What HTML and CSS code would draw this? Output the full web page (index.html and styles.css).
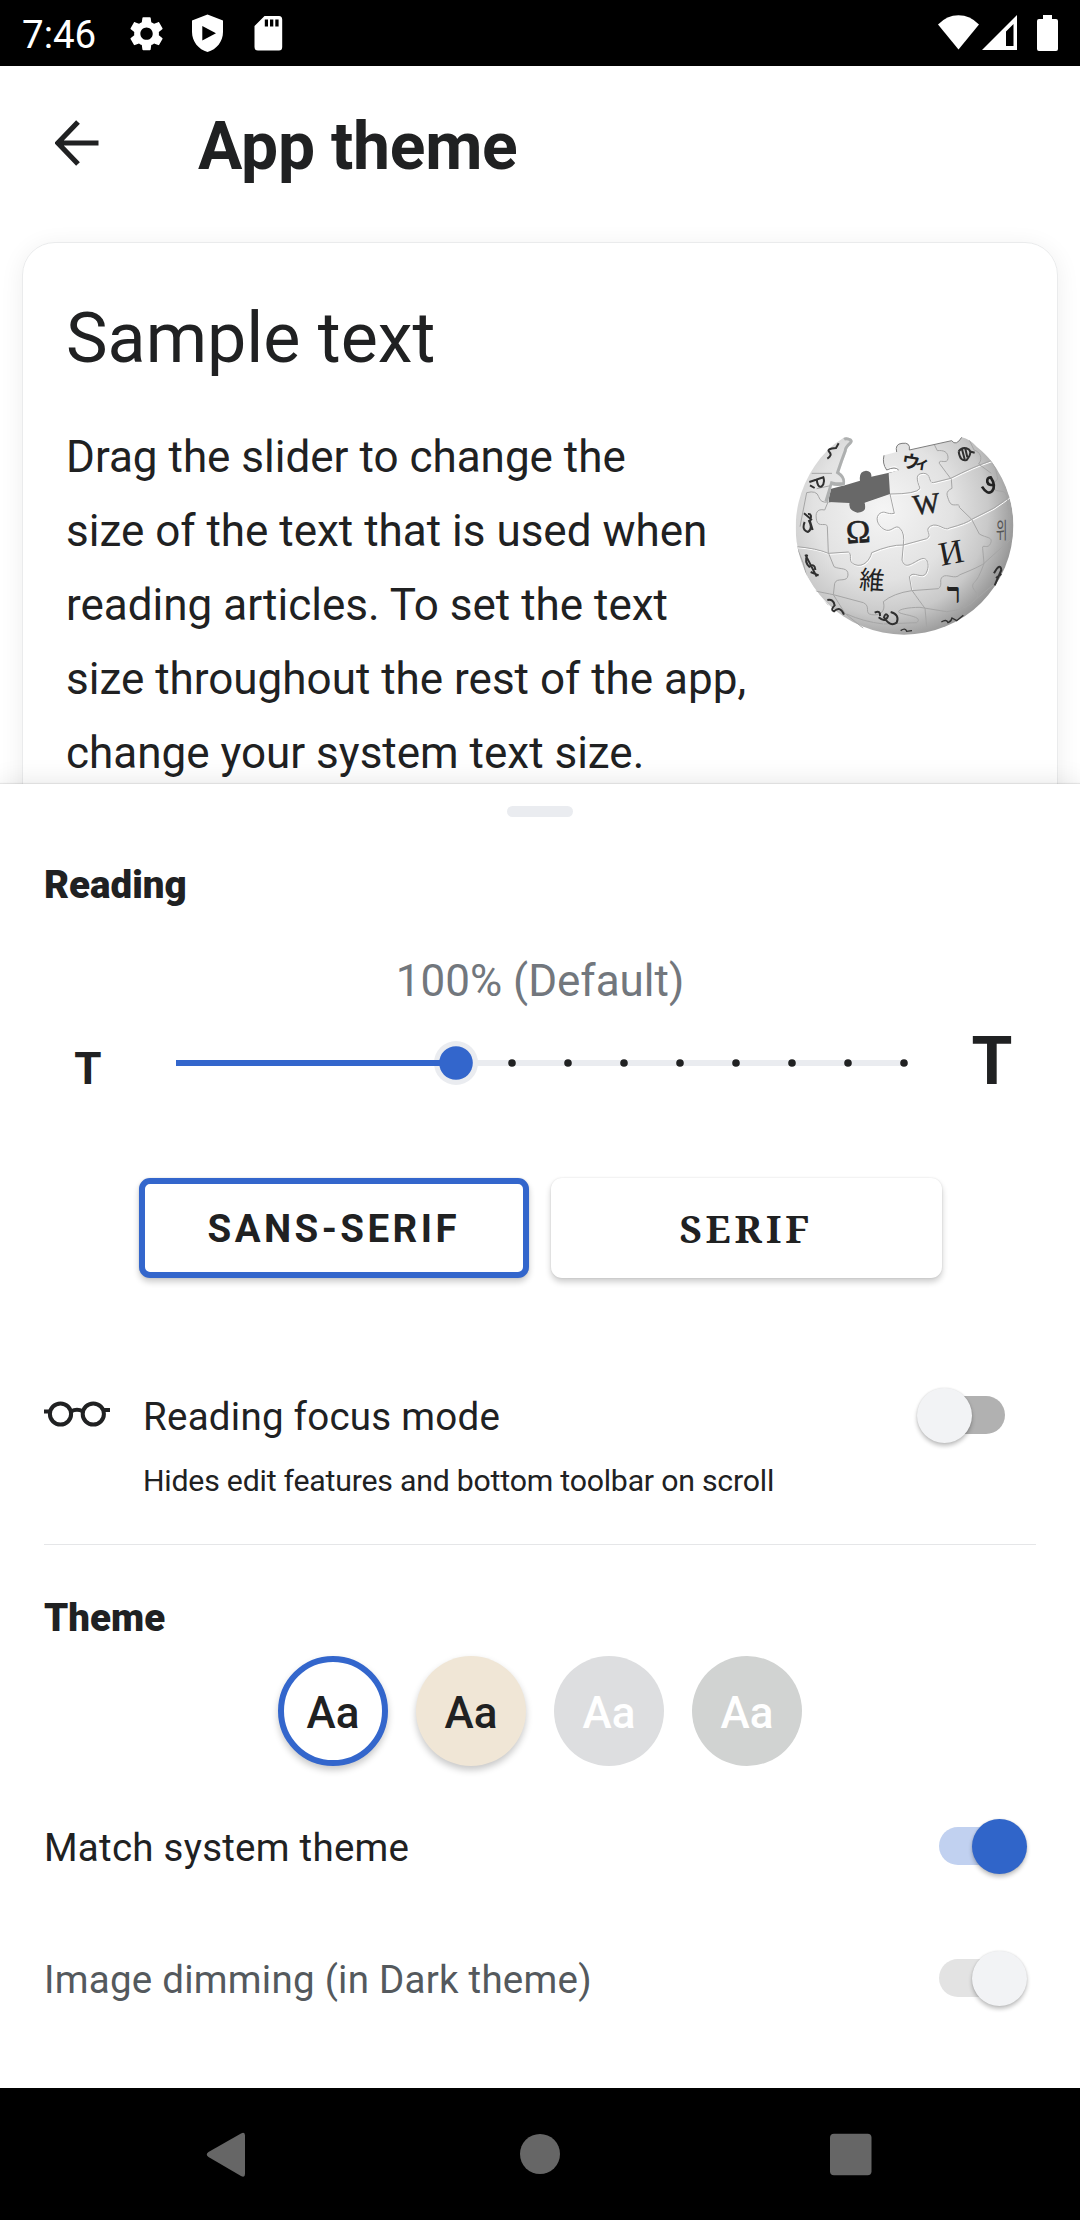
FILE: index.html
```html
<!DOCTYPE html>
<html lang="en">
<head>
<meta charset="utf-8">
<title>App theme</title>
<link rel="stylesheet" href="styles.css">
</head>
<body>
<div class="status-bar">
  <span class="clock">7:46</span>
  <svg class="status-left" width="164" height="66" viewBox="124 0 164 66" fill="#fff">
    <path transform="translate(125.9 13) scale(1.72)" d="M19.14 12.94c.04-.3.06-.61.06-.94 0-.32-.02-.64-.07-.94l2.03-1.58c.18-.14.23-.41.12-.61l-1.92-3.32c-.12-.22-.37-.29-.59-.22l-2.39.96c-.5-.38-1.03-.7-1.62-.94l-.36-2.54c-.04-.24-.24-.41-.48-.41h-3.84c-.24 0-.43.17-.47.41l-.36 2.54c-.59.24-1.13.57-1.62.94l-2.39-.96c-.22-.08-.47 0-.59.22L2.740 8.870c-.12.21-.08.47.12.61l2.03 1.58c-.05.3-.09.63-.09.94s.02.64.07.94l-2.03 1.58c-.18.14-.23.41-.12.61l1.92 3.32c.12.22.37.29.59.22l2.39-.96c.5.38 1.03.7 1.62.94l.36 2.54c.05.24.24.41.48.41h3.84c.24 0 .44-.17.47-.41l.36-2.54c.59-.24 1.13-.56 1.62-.94l2.39.96c.22.08.47 0 .59-.22l1.92-3.32c.12-.22.07-.47-.12-.61l-2.01-1.58zM12 15.6c-1.98 0-3.6-1.62-3.6-3.6s1.62-3.6 3.6-3.6 3.6 1.62 3.6 3.6-1.62 3.6-3.6 3.6z"/>
    <path fill-rule="evenodd" d="M207.500 14.500 223 20.500V32C223 41.500 216.500 49.500 207.500 52 198.500 49.500 192 41.500 192 32V20.500ZM202.300 26V40.500L216 33.200Z"/>
    <path fill-rule="evenodd" d="M264.500 16H279Q282.200 16 282.200 19.500V47Q282.200 50.500 279 50.500H258Q254.500 50.500 254.500 47V26ZM264.800 19.500V26.500H268V19.500ZM270 19.500V26.500H273.300V19.500ZM275.300 19.500V26.500H278.600V19.500Z"/>
  </svg>
  <svg class="status-right" width="124" height="66" viewBox="936 0 124 66" fill="#fff">
    <path d="M938 24.500Q947 15.300 958.500 15.300T979 24.500L958.500 49.500Z"/>
    <path fill-rule="evenodd" d="M982 50 1017 15V50ZM1006 31.500V46H1013.500V24Z"/>
    <path d="M1043 15H1052V19H1056Q1058 19 1058 21V49Q1058 51 1056 51H1039Q1037 51 1037 49V21Q1037 19 1039 19H1043Z"/>
  </svg>
</div>

<div class="preview">
  <header class="app-bar">
    <svg class="back" width="44" height="46" viewBox="0 0 44 46" fill="none" stroke="#202122" stroke-width="5.200">
      <path d="M43.500 23H4M23 2 2.800 23 23 44"/>
    </svg>
    <h1 class="title">App theme</h1>
  </header>
  <section class="card">
    <h2 class="card-title">Sample text</h2>
    <div class="card-body">
      <p class="card-text">Drag the slider to change the<br>size of the text that is used when<br>reading articles. To set the text<br>size throughout the rest of the app,<br>change your system text size.</p>
      <svg class="globe" width="250" height="230" viewBox="0 0 750 690">
        <defs>
          <radialGradient id="ball" gradientUnits="userSpaceOnUse" cx="310" cy="270" r="420">
            <stop offset="0" stop-color="#f5f5f5"/>
            <stop offset=".5" stop-color="#e2e2e2"/>
            <stop offset=".75" stop-color="#c9c9c9"/>
            <stop offset="1" stop-color="#8c8c8c"/>
          </radialGradient>
          <clipPath id="shape">
            <path d="M190 54Q200 48 214 56Q222 64 214 72Q200 84 200 94Q190 120 178 156Q200 170 194 196Q170 200 156 196L144 246L208 249Q204 270 232 278Q264 276 254 248L330 222L326 160L356 150Q350 128 320 148Q308 128 312 106L350 96Q344 72 366 70Q392 66 388 90L515 62Q528 80 545 52Q570 58 590 80Q620 104 634 124A327 327 0 1 1 104 138Q140 84 190 54Z"/>
          </clipPath>
        </defs>
        <path d="M148 208 200 194 240 182Q236 154 258 152Q276 154 274 170L354 152 330 224 254 250Q264 278 232 280 204 276 208 250L146 248Z" fill="#686868"/>
        <g clip-path="url(#shape)">
          <circle cx="372" cy="316" r="328" fill="url(#ball)"/>
          <g fill="none" stroke="#fff" stroke-width="3" transform="translate(2 3)">
            <path d="M330 222Q410 222 420 205C410 180 405 160 430 160S445 190 460 188L512 175Q580 140 634 122M50 380Q110 385 145 400L205 396C220 405 200 425 225 434S270 420 275 398Q330 374 370 375L440 356C460 345 430 330 452 318S495 335 508 324Q560 310 575 298L640 265Q670 245 692 228"/>
            <path d="M330 222L343 280C320 285 315 270 300 280S290 315 312 328 345 310 360 325Q375 340 370 375L366 420C375 450 395 430 420 418S450 440 438 460 400 450 388 470L395 510"/>
          </g>
          <g fill="none" stroke="#a5a5a5" stroke-width="3">
            <path d="M330 222Q410 222 420 205C410 180 405 160 430 160S445 190 460 188L512 175Q580 140 634 122"/>
            <path d="M50 380Q110 385 145 400L205 396C220 405 200 425 225 434S270 420 275 398Q330 374 370 375L440 356C460 345 430 330 452 318S495 335 508 324Q560 310 575 298L640 265Q670 245 692 228"/>
            <path d="M90 510Q140 520 160 524L250 548C275 560 250 580 275 584S318 575 310 545Q340 520 395 512L475 506C490 495 475 480 488 470S525 480 540 464Q600 440 612 430L690 360"/>
            <path d="M200 582Q250 605 310 612M312 612L410 608C425 595 405 590 370 582S370 562 420 562L500 575Q560 570 590 536L645 490"/>
            <path d="M144 246L134 270C110 265 105 280 110 302S140 305 142 320L145 398L162 440C180 450 205 440 204 465S170 470 164 490L160 524L195 580 250 625"/>
            <path d="M330 222L343 280C320 285 315 270 300 280S290 315 312 328 345 310 360 325Q375 340 370 375L366 420C375 450 395 430 420 418S450 440 438 460 400 450 388 470L395 510Q420 545 435 565L440 620"/>
            <path d="M460 68L472 92C490 90 505 95 504 115S475 115 478 130Q500 160 514 178L516 205C495 215 500 225 508 245S540 245 538 262L575 298L598 342C620 355 640 350 632 370S605 370 608 385L612 430Q595 480 580 490C570 510 600 515 590 536"/>
            <path d="M568 60L582 90C600 95 610 115 596 132L634 160M634 122Q650 145 652 170C660 180 630 190 640 205S675 205 680 228L690 300"/>
            <path d="M80 218Q110 210 116 230T144 246M156 196L110 206M80 218L60 320M95 160L156 160M50 380L70 430 90 510 145 556"/>
          </g>
          <path d="M190 54Q200 48 214 56Q222 64 214 72Q200 84 200 94Q190 120 178 156Q200 170 196 194Q175 198 158 194L142 246" fill="none" stroke="#aeb0b0" stroke-width="18"/>
        </g>
        <g fill="none" stroke="#7d7d7d" stroke-width="3">
          <path d="M312 106Q306 130 320 150Q346 138 356 150M350 96Q344 72 366 70Q392 66 388 90L515 62Q528 80 545 52"/>
        </g>
        <g class="glyphs">
          <text x="198" y="368" font-size="98" stroke="#222" stroke-width="2" transform="rotate(-4 238 335)">Ω</text>
          <text x="398" y="280" font-size="86" stroke="#222" stroke-width="1.500" transform="rotate(-7 440 250)">W</text>
          <text x="476" y="432" font-size="102" transform="rotate(-11 510 395)">И</text>
          <text x="238" y="508" font-size="76" transform="rotate(4 275 480)" class="cjk">維</text>
          <text x="366" y="146" font-size="54" font-weight="700" transform="rotate(9 400 125)" class="cjk">ウ</text>
          <text x="403" y="146" font-size="46" font-weight="700" transform="rotate(9 425 135)" class="cjk">ィ</text>
          <text x="648" y="354" font-size="64" textLength="34" lengthAdjust="spacingAndGlyphs" class="cjk korean">위</text>
          <text x="500" y="548" font-size="86" font-weight="700">ר</text>
        </g>
        <path d="M606 200Q622 226 636 214C646 202 640 184 632 172Q620 172 622 186 626 198 638 194" fill="none" stroke="#222" stroke-width="8"/>
        <g fill="none" stroke="#303030" stroke-width="6">
          <path d="M142 116Q158 106 148 96T168 84L176 70M88 186L130 172Q136 190 124 200 112 204 110 176M90 196L104 204M72 280L96 300M74 306Q64 330 84 336 100 326 86 300M84 282Q98 280 90 304L98 330"/>
          <path d="M76 404L110 470M82 404Q72 426 88 440 104 428 106 450M92 456L116 466M142 540Q160 536 164 556 150 570 162 574 180 556 192 584"/>
          <path d="M284 578Q302 570 300 588M296 592Q316 610 324 588 316 576 312 592 330 622 350 608 360 584 332 576"/>
          <path d="M536 94Q548 78 566 88 578 98 560 120 540 126 536 94M546 88L554 118M556 86L562 112M568 94L584 98M642 460Q660 426 664 450L644 496M648 474L664 462"/>
          <path d="M484 606Q500 596 504 608 514 604 516 594L530 602 550 586M362 632Q376 622 380 634L396 632" stroke-width="4"/>
        </g>
      </svg>
    </div>
  </section>
</div>

<main class="sheet">
  <div class="handle"></div>
  <h3 class="section-title reading">Reading</h3>
  <p class="size-label">100% (Default)</p>
  <div class="size-row">
    <span class="t-small">T</span>
    <svg class="slider" width="728" height="46" viewBox="0 0 728 46">
      <path d="M280 23H728" stroke="#eaecf0" stroke-width="6"/>
      <circle cx="280" cy="23" r="22" fill="#eaecf0"/>
      <path d="M0 23H280" stroke="#36c" stroke-width="6"/>
      <circle cx="280" cy="23" r="16.800" fill="#36c"/>
      <path d="M336 23h0M392 23h0M448 23h0M504 23h0M560 23h0M616 23h0M672 23h0M728 23h0" stroke="#202122" stroke-width="7.600" stroke-linecap="round"/>
    </svg>
    <span class="t-large">T</span>
  </div>
  <div class="fonts">
    <button class="font-btn selected">SANS-SERIF</button>
    <button class="font-btn serif">SERIF</button>
  </div>
  <div class="focus">
    <svg class="glasses" width="66" height="26" viewBox="0 0 66 26" fill="none" stroke="#202122" stroke-width="4">
      <circle cx="16.500" cy="13" r="10.600"/>
      <circle cx="49.300" cy="13" r="10.600"/>
      <path d="M0 10.500H6.500M59.500 9H66M27 10.500Q33 7 39 10.500"/>
    </svg>
    <div class="focus-text">
      <span class="label">Reading focus mode</span>
      <span class="hint">Hides edit features and bottom toolbar on scroll</span>
    </div>
    <div class="switch off"><i class="track"></i><i class="thumb"></i></div>
  </div>
  <hr class="divider">
  <h3 class="section-title theme">Theme</h3>
  <div class="swatches">
    <button class="swatch light">Aa</button>
    <button class="swatch sepia">Aa</button>
    <button class="swatch dark">Aa</button>
    <button class="swatch black">Aa</button>
  </div>
  <div class="row"><span class="label">Match system theme</span><div class="switch on"><i class="track"></i><i class="thumb"></i></div></div>
  <div class="row muted"><span class="label">Image dimming (in Dark theme)</span><div class="switch disabled"><i class="track"></i><i class="thumb"></i></div></div>
</main>

<nav class="nav-bar">
  <svg width="1080" height="132" viewBox="0 0 1080 132" fill="#666">
    <path d="M241 45.500 208.500 64Q205 66.500 208.500 69L241 88Q245 90 245 86V47.500Q245 43.500 241 45.500Z"/>
    <circle cx="540" cy="66" r="20"/>
    <rect x="830" y="45.800" width="41.500" height="41.500" rx="4"/>
  </svg>
</nav>
</body>
</html>
```
FILE: styles.css
```css
* { box-sizing: border-box; }

body {
  margin: 0;
  width: 1080px;
  height: 2220px;
  display: flex;
  flex-direction: column;
  overflow: hidden;
  background: #fff;
  color: #202122;
  font-family: Roboto, sans-serif;
}

h1, h2, h3, p { margin: 0; }
svg { display: block; }
button { border: 0; padding: 0; color: inherit; font-family: inherit; }

.status-bar {
  height: 66px;
  flex: none;
  display: flex;
  background: #000;
  color: #fff;
}
.clock { width: 124px; padding: 12px 0 0 22px; font-size: 38.5px; line-height: 46px; }
.status-right { margin: 0 20px 0 auto; }

.preview { height: 718px; flex: none; overflow: hidden; }

.app-bar { height: 154px; padding-left: 55px; display: flex; align-items: center; }
.title { margin: 7px 0 0 99px; font-size: 66px; line-height: 80px; font-weight: 700; letter-spacing: -.25px; }

.card {
  height: 700px;
  margin: 22px 22px 0;
  padding: 50px 27px 0 43px;
  border: 1px solid #eaebec;
  border-radius: 33px;
  box-shadow: 0 4px 24px rgba(0, 0, 0, .07);
}
.card-title { font-size: 70px; line-height: 90px; font-weight: 400; }
.card-body { margin-top: 37px; display: flex; justify-content: space-between; align-items: flex-start; }
.card-text { font-size: 44px; line-height: 74px; white-space: nowrap; }
.globe { flex: none; }
.glyphs { fill: #222; font-family: "Liberation Serif", serif; }
.glyphs .cjk { font-family: "Noto Sans CJK JP", "Noto Sans CJK KR", sans-serif; }
.glyphs .korean { fill: #555; }

.sheet {
  flex: 1;
  position: relative;
  padding-top: 22px;
  background: #fff;
  box-shadow: 0 -1px 1px rgba(0, 0, 0, .08), 0 0 26px rgba(0, 0, 0, .11);
}
.handle { width: 66px; height: 11px; margin: 0 auto; border-radius: 6px; background: #eaecf0; }
.section-title { padding-left: 44px; font-size: 38.5px; line-height: 44px; font-weight: 900; }
.reading { margin-top: 46px; }
.size-label { margin-top: 48px; text-align: center; font-size: 44px; line-height: 52px; color: #72777d; }

.size-row {
  height: 112px;
  display: grid;
  grid-template-columns: 176px 1fr 176px;
  align-items: center;
  text-align: center;
  font-weight: 700;
}
.slider { overflow: visible; }
.t-small { font-size: 44px; line-height: 52px; padding-top: 12px; }
.t-large { font-size: 66px; line-height: 76px; padding-bottom: 3px; }

.fonts { margin-top: 59px; display: flex; justify-content: center; gap: 22px; }
.font-btn {
  width: 390.5px;
  height: 100px;
  border-radius: 11px;
  background: #fff;
  box-shadow: 0 4px 6px rgba(0, 0, 0, .2), 0 0 2px rgba(0, 0, 0, .12);
  font-size: 38.5px;
  font-weight: 700;
  letter-spacing: 3.44px;
}
.font-btn.selected { border: 6px solid #36c; }
.font-btn.serif { font-family: "Noto Serif", "Liberation Serif", serif; letter-spacing: 3.9px; }

.focus { margin: 109px 53px 0 44px; display: flex; align-items: flex-start; }
.glasses { margin-top: 14px; }
.focus-text { flex: 1; margin: 7px 0 0 33px; display: flex; flex-direction: column; gap: 23px; }
.label { font-size: 38.5px; line-height: 46px; letter-spacing: .25px; }
.hint { font-size: 30.25px; line-height: 36px; letter-spacing: -.22px; }

.switch { width: 110px; height: 56px; display: grid; align-items: center; }
.track, .thumb { grid-area: 1 / 1; }
.track { width: 66px; height: 38px; margin-left: 22px; border-radius: 19px; background: #b1b1b1; }
.thumb {
  width: 55px;
  height: 55px;
  border-radius: 50%;
  background: #f2f3f5;
  box-shadow: 0 3px 4px rgba(0, 0, 0, .24), 0 0 2px rgba(0, 0, 0, .12);
}
.on .thumb, .disabled .thumb { justify-self: end; }
.on .track { background: #c1d1f0; }
.on .thumb { background: #3065c9; }
.disabled .track { background: #e3e3e3; }

.divider { height: 1px; margin: 45px 44px 0; border: 0; background: #e5e6e8; }
.theme { margin-top: 51px; }

.swatches { margin-top: 16px; display: flex; justify-content: center; gap: 28px; }
.swatch { width: 110px; height: 110px; padding-top: 4px; border-radius: 50%; font-size: 44px; font-weight: 500; }
.light, .sepia { box-shadow: 0 4px 7px rgba(0, 0, 0, .22); }
.light { padding-top: 3px; border: 6px solid #36c; background: #fff; }
.sepia { background: #f0e6d6; }
.dark { background: #dddee0; color: #fff; }
.black { background: #d1d3d2; color: #fff; }

.row { height: 132px; padding: 0 53px 0 44px; display: flex; align-items: center; justify-content: space-between; }
.row .label { padding-top: 4px; }
.swatches + .row { margin-top: 14px; }
.muted { color: #54595d; }

.nav-bar { height: 132px; flex: none; position: relative; background: #000; }
```
